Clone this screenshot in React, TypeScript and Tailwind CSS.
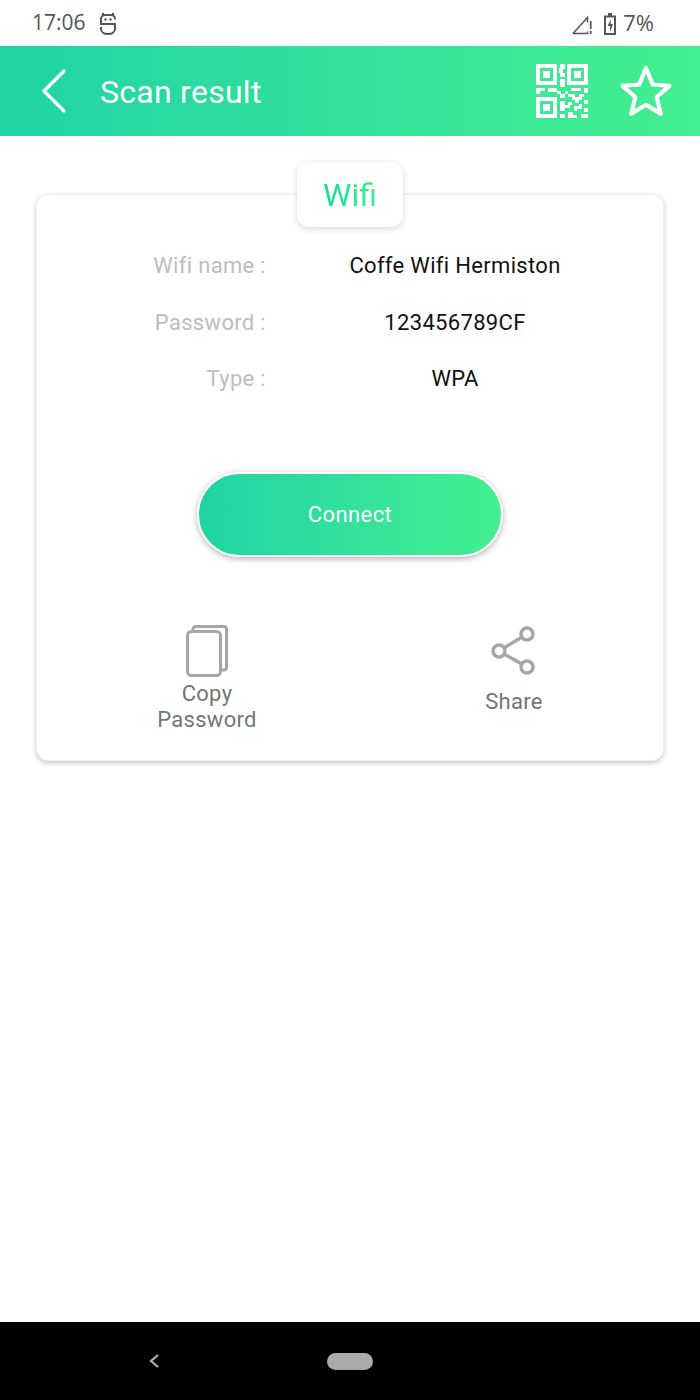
import React from "react";

const QR = () => (
  <svg width="54" height="54" viewBox="0 0 54 54" fill="#fff">
    <path fillRule="evenodd" d="M1 0h21v21H1zM5 4v13h13V4zM8 7h7v7H8zM32 0h21v21H32zM36 4v13h13V4zM39 7h7v7h-7zM1 33h21v21H1zM5 37v13h13V37zM8 40h7v7H8z" />
    <path d="M25 0h5v5h-2v4h2v4h-5V9h-1V4h1zM25 15h5v8h-5zM1 24h9v3H5v3H1zM13 24h9v3h4v3h4v-3h3v3h-3v4h-5v-4h-3v-2H13zM36 24h10v3H36zM49 24h4v5h-4zM33 30h7v3h4v-3h5v3h-2v3h-3v3h-4v-3h-3v-3h-4zM49 36h4v4h-4zM25 37h5v4h3v-3h4v3h-2v3h-5v3h-5zM39 42h5v-2h3v5h-5v2h-3zM49 44h4v4h-4zM25 50h5v4h-5zM33 48h5v3h4v3h-9zM46 50h7v4h-7z" />
  </svg>
);

export default function App() {
  return (
    <div className="flex h-[1400px] w-[700px] flex-col overflow-hidden bg-white font-['Roboto',sans-serif]">
      <div className="flex h-[46px] shrink-0 items-center justify-between pl-8 pr-[46px] text-[#555] font-['Open_Sans',sans-serif]">
        <div className="flex items-center gap-[13px]">
          <span className="mb-[2px] text-[21px] leading-none">17:06</span>
          <svg width="18" height="23" viewBox="0 0 18 23" fill="none" stroke="#555" strokeWidth="2">
            <path d="M16 7.500V6.500c0-2-2-3.500-4-3.500H6C4 3 2 4.500 2 6.500V12h14v5c0 3-3 5-7 5s-7-2-7-5v-2" />
            <path d="M4 3V1M14 3V1" />
            <circle cx="6.500" cy="7.500" r="1.200" fill="#555" stroke="none" />
            <circle cx="11.500" cy="7.500" r="1.200" fill="#555" stroke="none" />
          </svg>
        </div>
        <div className="flex items-center">
          <svg className="mr-[12px] mt-[3px]" width="20" height="20" viewBox="0 0 20 20" fill="none" stroke="#555" strokeWidth="1.500">
            <path d="M1 18.500 15.500 2.500v5M1 18.500h14.500v-2" />
            <path d="M18.700 6v8M18.700 16v3" strokeWidth="1.800" />
          </svg>
          <svg className="mr-[7px] mt-[1px]" width="12" height="22" viewBox="0 0 12 22" fill="none">
            <path d="M4 0h4v2.500h4V22H0V2.500h4z" fill="#555" />
            <path d="M2 4.500h8V20H2z" fill="#fff" />
            <path d="M7 6 3.500 13H6v6l3-8H6.500z" fill="#555" />
          </svg>
          <span className="mb-[2px] text-[22px] leading-none">7%</span>
        </div>
      </div>

      <div className="flex h-[90px] shrink-0 items-center bg-gradient-to-r from-[#1fd3a5] to-[#43ef8f] pl-[42px] pr-[27px]">
        <svg width="24" height="44" viewBox="0 0 24 44" fill="none" stroke="#fff" strokeWidth="3.200" strokeLinecap="round" strokeLinejoin="round">
          <path d="M22 2 2 22l20 20" />
        </svg>
        <span className="ml-[34px] flex-1 pt-[2px] text-[32px] leading-none tracking-[0.27px] text-white">Scan result</span>
        <QR />
        <svg className="ml-[30px]" width="54" height="54" viewBox="0 0 54 54" fill="none" stroke="#fff" strokeWidth="4.200" strokeLinejoin="round">
          <path d="M27 4 33.700 20.500 50.500 21.800 37.700 33 41.700 49.800 27 40.800 12.300 49.800 16.300 33 3.500 21.800 20.300 20.500z" />
        </svg>
      </div>

      <div className="relative mx-9 mt-[58px] h-[567px] rounded-xl border border-[#f0f0f0] bg-white shadow-[0_2px_5px_rgba(0,0,0,0.22)]">
        <div className="absolute left-[260px] top-[-33px] flex h-[65px] w-[106px] items-center justify-center rounded-xl bg-white text-[32px] shadow-[0_2px_6px_rgba(0,0,0,0.16)]">
          <span className="bg-gradient-to-r from-[#14dc96] to-[#3cf08c] bg-clip-text text-transparent">Wifi</span>
        </div>

        <div className="flex flex-col gap-[30.5px] pt-[58px] text-[22px] leading-[26px] tracking-[0.32px]">
          {[
            ["Wifi name :", "Coffe Wifi Hermiston"],
            ["Password :", "123456789CF"],
            ["Type :", "WPA"],
          ].map(([k, v]) => (
            <div key={k} className="grid grid-cols-[229px_378px]">
              <span className="text-right text-[#bdbdbd]">{k}</span>
              <span className="text-center text-[#111]">{v}</span>
            </div>
          ))}
        </div>

        <div className="mt-[80px] flex justify-center">
          <button className="flex h-[85px] w-[306px] items-center justify-center rounded-full border-2 border-white bg-gradient-to-r from-[#1fd3a5] to-[#43ef8f] text-[22px] tracking-[0.4px] text-white shadow-[0_2px_6px_rgba(0,0,0,0.3)]">
            Connect
          </button>
        </div>

        <div className="mt-[68px] grid grid-cols-[340px_274px] text-[22px] leading-[26px] tracking-[0.3px] text-[#757575]">
          <div className="flex flex-col items-center">
            <svg width="42" height="52" viewBox="0 0 42 52" fill="none" stroke="#a6a6a6" strokeWidth="3" strokeLinejoin="round">
              <path d="M7 6V4.500C7 2.500 8 1.500 10 1.500h28c2 0 2.500 1 2.500 3v38c0 1.500-1 2.500-2.500 2.500h-3.500" />
              <rect x="1.500" y="6.500" width="33" height="44" rx="4" />
            </svg>
            <span className="mt-[4px] w-[120px] text-center">Copy Password</span>
          </div>
          <div className="flex flex-col items-center">
            <svg width="46" height="50" viewBox="0 0 46 50" fill="none" stroke="#a6a6a6" strokeWidth="3.400">
              <circle cx="36" cy="9" r="6" />
              <circle cx="8" cy="26" r="6" />
              <circle cx="36" cy="42" r="6" />
              <path d="M13 23 31 12M13 29 31 39" />
            </svg>
            <span className="mt-[14px]">Share</span>
          </div>
        </div>
      </div>

      <div className="mt-auto flex h-[78px] shrink-0 items-center bg-black pl-[148px]">
        <svg width="12" height="16" viewBox="0 0 12 16" fill="none" stroke="#b0b0b0" strokeWidth="2.200">
          <path d="M10 2 3 8l7 6" />
        </svg>
        <div className="ml-[167px] h-[17px] w-[46px] rounded-full bg-[#aaaaaa]" />
      </div>
    </div>
  );
}
